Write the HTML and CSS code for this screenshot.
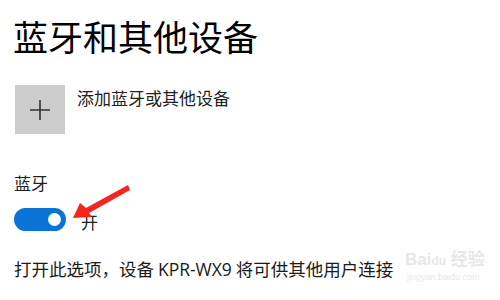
FILE: index.html
```html
<!DOCTYPE html>
<html lang="zh-CN">
<head>
<meta charset="utf-8">
<link rel="stylesheet" href="styles.css">
</head>
<body>
<div class="page">
  <h1 class="title">蓝牙和其他设备</h1>
  <div class="add-row">
    <div class="add-tile">
      <svg width="22" height="22" viewBox="0 0 22 22"><path d="M11 1V21M1 11H21" stroke="#333" stroke-width="1.6" fill="none"/></svg>
    </div>
    <div class="add-label">添加蓝牙或其他设备</div>
  </div>
  <div class="section-label">蓝牙</div>
  <div class="toggle-row">
    <div class="toggle"><span class="knob"></span></div>
    <span class="toggle-text">开</span>
    <svg class="arrow" width="64" height="42" viewBox="0 0 64 42">
      <polygon points="1,36 8,21 14,26 56,3 58,8 17,31 20,35" fill="#f4251b"/>
    </svg>
  </div>
  <p class="desc">打开此选项，设备 <span class="latin">KPR-WX9</span> 将可供其他用户连接</p>
  <div class="watermark">
    <div class="wm-top">Bai<span class="wm-du">du</span> 经验</div>
    <div class="wm-url">jingyan.baidu.com</div>
  </div>
</div>
</body>
</html>
```

FILE: styles.css
```css
html, body {
  margin: 0;
  padding: 0;
  background: #ffffff;
  width: 500px;
  height: 300px;
  overflow: hidden;
}
body {
  font-family: "Noto Sans CJK SC", sans-serif;
  color: #1a1a1a;
}
.page {
  position: relative;
  padding: 14px 0 0 14px;
  height: 300px;
  box-sizing: border-box;
}
.title {
  margin: 0;
  font-family: "Noto Sans CJK SC", sans-serif;
  font-weight: 400;
  font-size: 35px;
  line-height: 44px;
  color: #000;
  margin-left: -1px;
}
.add-row {
  display: flex;
  align-items: flex-start;
  gap: 12px;
  margin-top: 27px;
  margin-left: 1px;
}
.add-tile {
  width: 50px;
  height: 49px;
  background: #cccccc;
  display: flex;
  align-items: center;
  justify-content: center;
}
.add-label {
  font-size: 17px;
  line-height: 24px;
  margin-top: 1px;
  color: #222;
}
.section-label {
  font-size: 17px;
  line-height: 24px;
  margin-top: 37px;
  color: #222;
}
.toggle-row {
  position: relative;
  display: flex;
  align-items: center;
  gap: 15px;
  margin-top: 10px;
  height: 28px;
}
.toggle {
  width: 52px;
  height: 23px;
  border-radius: 12px;
  background: #0a74d6;
  position: relative;
  flex: none;
}
.knob {
  position: absolute;
  right: 5px;
  top: 5px;
  width: 13px;
  height: 13px;
  border-radius: 50%;
  background: #fff;
}
.toggle-text {
  font-size: 17px;
  line-height: 24px;
  margin-top: 6px;
  color: #222;
}
.arrow {
  position: absolute;
  left: 58px;
  top: -23px;
}
.desc {
  margin: 24px 0 0 0;
  font-size: 17.5px;
  line-height: 24px;
  color: #1a1a1a;
  white-space: nowrap;
}
.latin {
  font-family: "Open Sans", sans-serif;
  font-size: 17.5px;
}
.watermark {
  position: absolute;
  left: 405px;
  top: 250px;
  color: #e8e8e8;
  font-family: "Liberation Sans", "Noto Sans CJK SC", sans-serif;
  white-space: nowrap;
}
.wm-top {
  font-size: 17px;
  font-weight: 700;
  line-height: 20px;
}
.wm-du {
  font-size: 12px;
}
.wm-url {
  font-size: 9px;
  line-height: 12px;
  margin-left: 2px;
}
```
